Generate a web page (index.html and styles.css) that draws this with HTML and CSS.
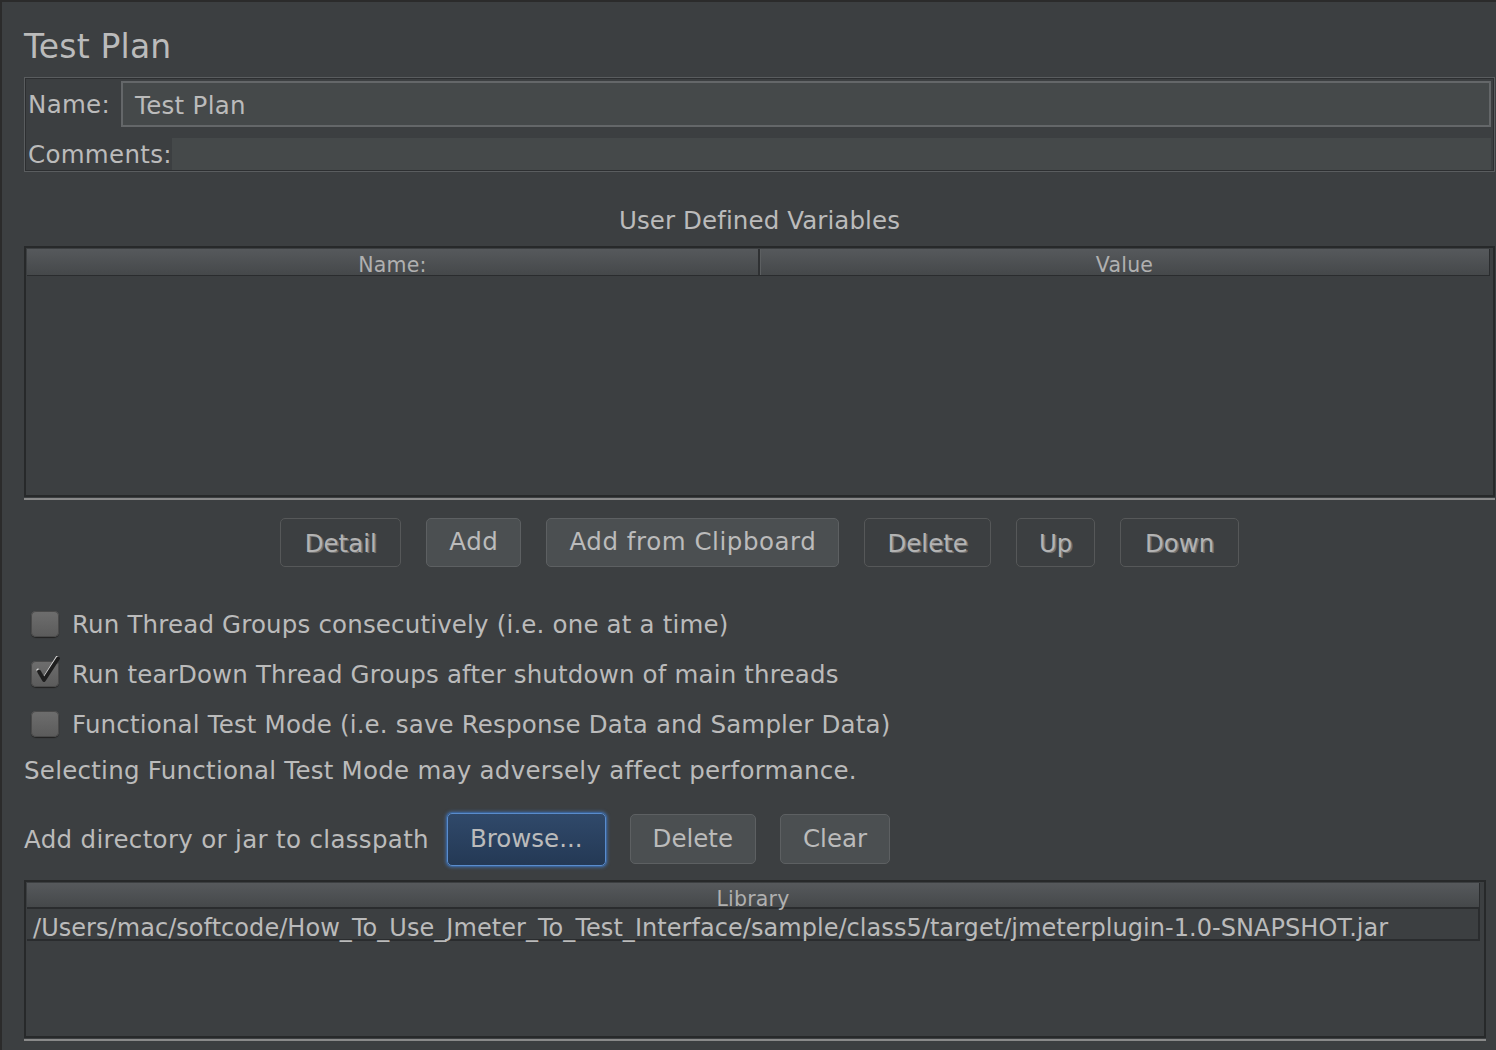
FILE: index.html
```html
<!DOCTYPE html>
<html>
<head>
<meta charset="utf-8">
<title>Test Plan</title>
<link rel="stylesheet" href="styles.css">
</head>
<body>
<div class="panel">
  <h1 class="title">Test Plan</h1>

  <div class="namebox">
    <div class="name-row">
      <span class="lbl">Name:</span>
      <div class="field">Test Plan</div>
    </div>
    <div class="comments-row">
      <span class="lbl">Comments:</span>
      <div class="area"></div>
    </div>
  </div>

  <div class="section-title">User Defined Variables</div>

  <div class="scroll vars-wrap">
    <div class="table vars">
      <div class="thead">
        <div class="th">Name:</div>
        <div class="th">Value</div>
      </div>
      <div class="tbody"></div>
    </div>
  </div>

  <div class="buttons">
    <button class="btn disabled wide">Detail</button>
    <button class="btn">Add</button>
    <button class="btn">Add from Clipboard</button>
    <button class="btn disabled">Delete</button>
    <button class="btn disabled">Up</button>
    <button class="btn disabled wide">Down</button>
  </div>

  <div class="checks">
    <label class="check"><span class="box"></span><span>Run Thread Groups consecutively (i.e. one at a time)</span></label>
    <label class="check"><span class="box"><svg class="tick" viewBox="0 0 34 32" width="34" height="32"><path d="M9 14 L14.5 23 L28 1.5" fill="none" stroke="#dcdcdc" stroke-width="3" stroke-linecap="round" stroke-linejoin="round"/><path d="M10 15.5 L15 24 L29 2.5" fill="none" stroke="#1e1e1e" stroke-width="3.8" stroke-linecap="round" stroke-linejoin="round"/></svg></span><span>Run tearDown Thread Groups after shutdown of main threads</span></label>
    <label class="check"><span class="box"></span><span>Functional Test Mode (i.e. save Response Data and Sampler Data)</span></label>
  </div>

  <p class="note">Selecting Functional Test Mode may adversely affect performance.</p>

  <div class="classpath">
    <span class="cp-label">Add directory or jar to classpath</span>
    <button class="btn focus">Browse...</button>
    <button class="btn">Delete</button>
    <button class="btn">Clear</button>
  </div>

  <div class="scroll lib-wrap">
    <div class="table lib">
      <div class="thead">
        <div class="th">Library</div>
      </div>
      <div class="lib-row">/Users/mac/softcode/How_To_Use_Jmeter_To_Test_Interface/sample/class5/target/jmeterplugin-1.0-SNAPSHOT.jar</div>
    </div>
  </div>
</div>
</body>
</html>
```

FILE: styles.css
```css
* { box-sizing: border-box; }
html, body { margin: 0; padding: 0; }
body {
  background: #3c3f41;
  color: #bbbbbb;
  font-family: "DejaVu Sans", "Liberation Sans", sans-serif;
  font-size: 24.5px;
  overflow: hidden;
}
.panel {
  width: 1496px;
  height: 1050px;
  border-left: 2px solid #2b2b2b;
  border-top: 2px solid #2b2b2b;
  padding: 0 1px 0 22px;
}
.title {
  margin: 0;
  padding-top: 27px;
  font-size: 33px;
  line-height: 36px;
  font-weight: normal;
  color: #bbbbbb;
  letter-spacing: 0.2px;
}

/* name / comments */
.namebox {
  margin-top: 12px;
  border: 1px solid #5a5d5f;
  box-shadow: inset 0 0 0 1px #2d2f31;
  padding: 3px 3px 1px 3px;
}
.name-row {
  display: flex;
  align-items: center;
  height: 46px;
}
.lbl { white-space: nowrap; line-height: 30px; letter-spacing: 0.3px; }
.name-row .lbl { margin-right: 11px; padding-top: 2px; }
.field {
  flex: 1;
  height: 46px;
  border: 2px solid #646769;
  background: #45494a;
  padding-left: 12px;
  display: flex;
  align-items: center;
  letter-spacing: 0.3px;
  padding-top: 2px;
}
.comments-row {
  display: flex;
  align-items: center;
  height: 32px;
  margin-top: 11px;
}
.comments-row .lbl { padding-top: 2px; }
.area {
  flex: 1;
  height: 32px;
  background: #45494a;
}

.section-title {
  text-align: center;
  padding-top: 36px;
  line-height: 26px;
  height: 74px;
  letter-spacing: 0.1px;
}

/* tables */
.scroll {
  border-bottom: 2px solid #8a8a8a;
  padding-bottom: 1px;
}
.table {
  border: 2px solid #27292a;
  display: flex;
  flex-direction: column;
}
.vars { height: 251px; }
.thead {
  display: flex;
  height: 27px;
  margin: 1px 3px 0 1px;
  background: linear-gradient(#56595c, #45484a);
  border-bottom: 1px solid #2a2c2e;
  border-right: 1px solid #2a2c2e;
  font-size: 20.5px;
  color: #b0b0b0;
}
.th {
  flex: 1;
  text-align: center;
  line-height: 26px;
  padding-top: 3px;
  letter-spacing: 0.2px;
}
.vars .th:first-child {
  border-right: 2px solid #2f3133;
  flex: 0 0 733px;
}
.th:first-child + .th { box-shadow: inset 1px 0 0 #5c5f61; }

/* buttons */
.buttons {
  display: flex;
  justify-content: center;
  gap: 25px;
  margin-top: 18px;
}
.btn {
  font-family: inherit;
  font-size: 24.5px;
  height: 49px;
  padding: 0 23px;
  border-radius: 5px;
  border: 1px solid #5d6062;
  background: #4b4f51;
  color: #bbbbbb;
  line-height: 1;
}
.buttons .btn:not(.disabled) { letter-spacing: 0.55px; padding: 0 22px; }
.btn.disabled {
  background: #3c3f41;
  border-color: #565859;
  color: #b3b3b3;
  text-shadow: 1.5px 1px 0 #707070;
  padding: 3px 22px 0;
}
.btn.disabled.wide { padding: 3px 23.5px 0; }
.btn.focus {
  background: linear-gradient(#30496a, #243955);
  border: 1px solid #5a8ccc;
  box-shadow: 0 0 0 1px #3b6397, 0 0 3px 2px rgba(70,120,190,0.55);
  height: 51px;
}

/* checkboxes */
.checks { margin-top: 32px; letter-spacing: 0.17px; }
.check {
  display: flex;
  align-items: center;
  height: 50px;
  padding-left: 7px;
}
.box {
  position: relative;
  width: 28px;
  height: 26px;
  border-radius: 5px;
  background: linear-gradient(#6e6e6e, #5b5b5b);
  box-shadow: 0 1px 1px #222, inset 0 0 0 1px #4a4a4a;
  margin-right: 13px;
  flex: none;
}
.tick {
  position: absolute;
  left: -2px;
  top: -5px;
}

.note {
  margin: 0;
  line-height: 44px;
  letter-spacing: 0.25px;
}

.classpath {
  display: flex;
  align-items: center;
  height: 52px;
  margin-top: 20px;
}
.cp-label { margin-right: 18px; letter-spacing: 0.33px; }
.classpath .btn { height: 50px; margin-right: 24px; padding: 0 22px; }
.classpath .btn.focus { height: 53px; }

.lib-wrap { margin-top: 15px; width: 1462px; }
.lib { height: 158px; }
.lib .thead { height: 26px; margin-right: 4px; border-bottom-width: 2px; }
.lib .th { line-height: 25px; padding-top: 4px; }
.lib-row {
  height: 32px;
  margin: 0 4px 0 1px;
  border-bottom: 2px solid #2a2c2e;
  border-right: 2px solid #2a2c2e;
  padding-left: 6px;
  padding-top: 5px;
  line-height: 28px;
  white-space: nowrap;
  font-size: 24px;
  letter-spacing: 0.05px;
}
```
